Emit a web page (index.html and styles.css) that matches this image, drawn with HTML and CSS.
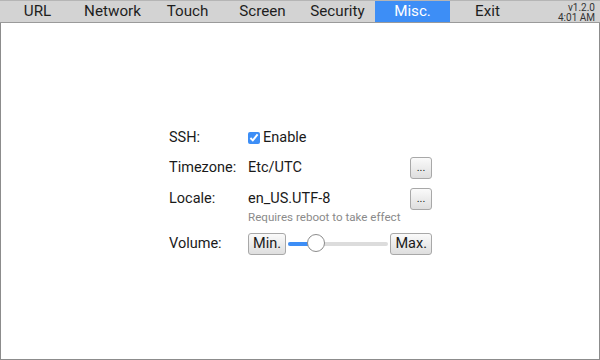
FILE: index.html
```html
<!DOCTYPE html>
<html lang="en">
<head>
  <meta charset="UTF-8" />
  <title>Settings</title>
  <link rel="stylesheet" href="styles.css">
</head>
<body>
  <div class="frame">
    <div class="tabs">
      <div class="tab">URL</div>
      <div class="tab">Network</div>
      <div class="tab">Touch</div>
      <div class="tab">Screen</div>
      <div class="tab">Security</div>
      <div class="tab active">Misc.</div>
      <div class="tab">Exit</div>
      <div class="version">
        <span>v1.2.0</span>
        <span>4:01 AM</span>
      </div>
    </div>

    <div class="content">
      <div class="form">
        <div class="row ssh">
          <div class="label">SSH:</div>
          <label class="value check"><input type="checkbox" checked> Enable</label>
        </div>

        <div class="row">
          <div class="label">Timezone:</div>
          <div class="value">Etc/UTC</div>
          <button class="btn dots">...</button>
        </div>

        <div class="row">
          <div class="label">Locale:</div>
          <div class="value">en_US.UTF-8</div>
          <button class="btn dots">...</button>
        </div>
        <div class="hint">Requires reboot to take effect</div>

        <div class="row volume">
          <div class="label">Volume:</div>
          <button class="btn">Min.</button>
          <div class="slider">
            <div class="fill" style="width: 28%"></div>
            <div class="thumb" style="left: 28%"></div>
          </div>
          <button class="btn">Max.</button>
        </div>
      </div>
    </div>
  </div>
</body>
</html>
```

FILE: styles.css
```css
html, body {
  margin: 0;
  height: 100%;
}

body {
  font-family: Roboto, "Liberation Sans", sans-serif;
  color: #1a1a1a;
  background: white;
}

.frame {
  box-sizing: border-box;
  height: 360px;
  border: 1px solid #8c8c8c;
  border-top: none;
  display: flex;
  flex-direction: column;
}

.tabs {
  display: flex;
  background-color: #d3d3d3;
  border-top: 1px solid #b5b5b5;
  border-bottom: 1px solid #9a9a9a;
  box-sizing: border-box;
  height: 23px;
  margin: 0 -1px;
}

.tab {
  width: 75px;
  text-align: center;
  font-size: 15.2px;
  line-height: 21px;
  color: #1e1e1e;
}

.tab.active {
  background-color: #3d8ef6;
  color: white;
}

.version {
  flex: 1;
  display: flex;
  flex-direction: column;
  align-items: flex-end;
  justify-content: center;
  gap: 1px;
  padding: 1px 5px 0 0;
  font-size: 10px;
  line-height: 9px;
  color: #333;
}

.content {
  flex: 1;
  display: flex;
  align-items: center;
  justify-content: center;
}

.form {
  width: 263px;
  font-size: 14.5px;
  margin-left: 1px;
}

.row {
  display: flex;
  align-items: center;
  height: 22px;
  margin-top: 9px;
}

.row.ssh {
  height: 20px;
  margin-top: 0;
}

.row + .row {
  margin-top: 9px;
}

.label {
  width: 79px;
}

.value {
  flex: 1;
}

.check {
  display: flex;
  align-items: center;
  gap: 3px;
}

.check input {
  margin: 0;
  width: 12px;
  height: 12px;
  accent-color: #3d8ef6;
}

.btn {
  font-family: inherit;
  font-size: 14.5px;
  color: #1a1a1a;
  height: 22px;
  padding: 0 4px;
  border: 1px solid #a8a8a8;
  border-radius: 3px;
  background: linear-gradient(#fafafa, #dedede);
  line-height: 18px;
}

.btn.dots {
  width: 22px;
  padding: 0;
  font-size: 11px;
}

.hint {
  margin-left: 79px;
  font-size: 11.6px;
  color: #8a8a8a;
  line-height: 14px;
}

.slider {
  flex: 1;
  position: relative;
  height: 4px;
  margin: 0 2px;
  background-color: #dcdcdc;
  border-radius: 2px;
}

.fill {
  height: 100%;
  background-color: #3d8ef6;
  border-radius: 2px;
}

.thumb {
  position: absolute;
  top: -8px;
  width: 18px;
  height: 18px;
  margin-left: -9px;
  box-sizing: border-box;
  border: 1px solid #8c8c8c;
  border-radius: 50%;
  background: white;
}
```
